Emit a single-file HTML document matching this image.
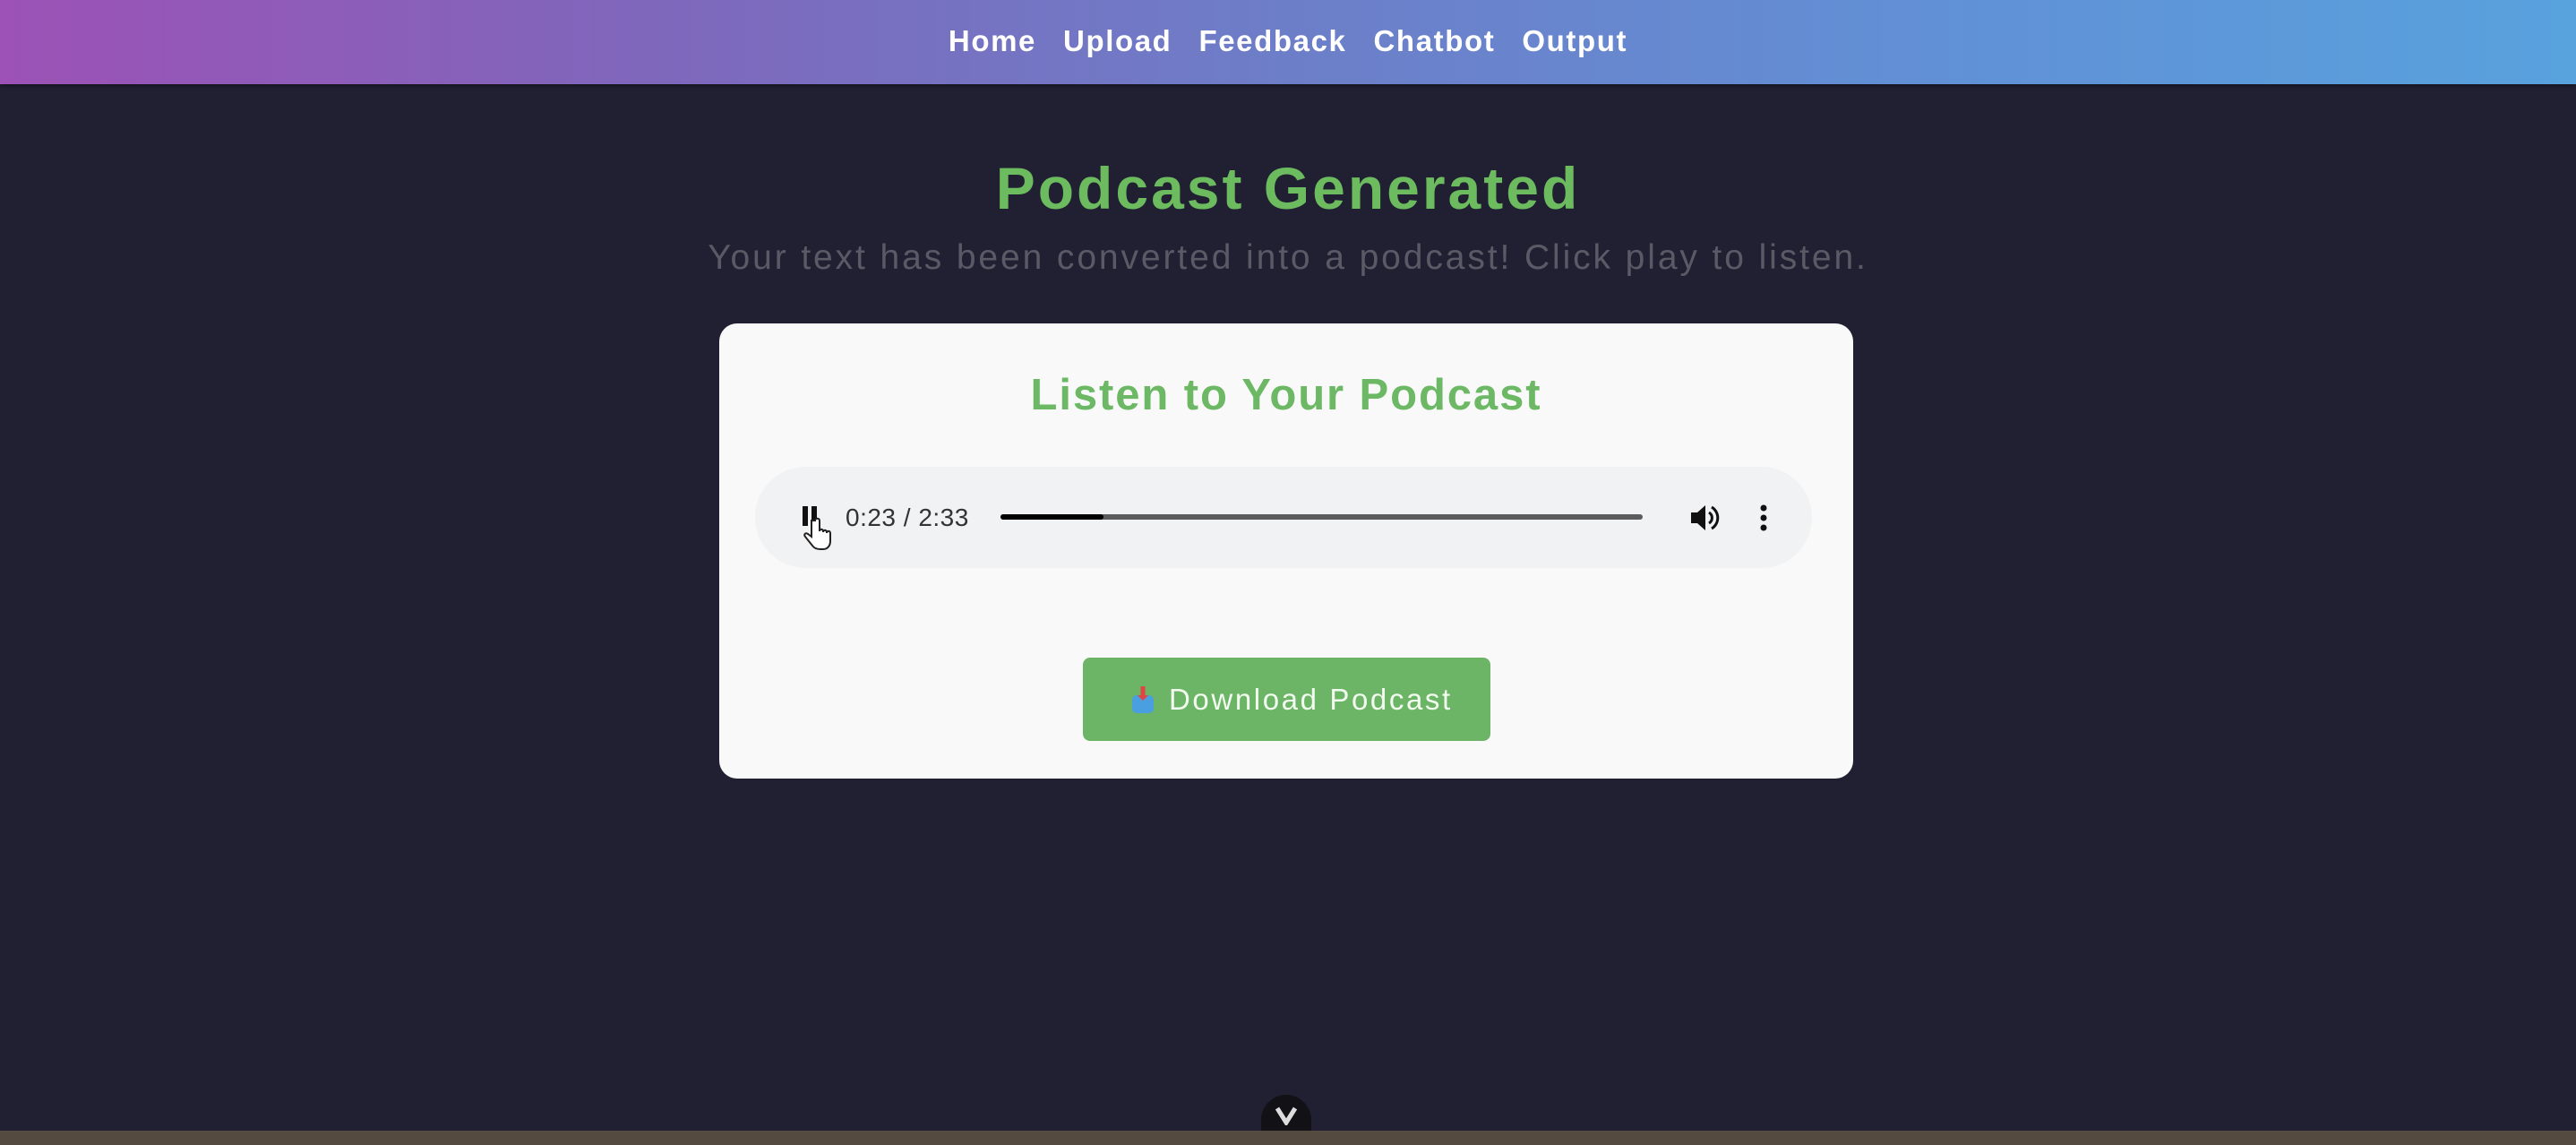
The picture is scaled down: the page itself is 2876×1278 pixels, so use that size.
<!DOCTYPE html>
<html><head><meta charset="utf-8"><style>
*{margin:0;padding:0;box-sizing:border-box}
html,body{width:2876px;height:1278px;overflow:hidden;background:#212033;font-family:"Liberation Sans",sans-serif}
.nav{position:absolute;left:0;top:0;width:2876px;height:94px;background:linear-gradient(90deg,#9c52b6 0%,#7f67bc 25%,#6d7ec8 50%,#6190d6 75%,#58a2de 100%);text-align:center;box-shadow:0 2px 4px rgba(0,0,0,.4)}
.nav span{display:inline-block;color:#fff;font-weight:bold;font-size:33px;line-height:92px;margin:0 15px;letter-spacing:1.6px}
.h1{position:absolute;left:0;width:2876px;top:172px;text-align:center;color:#6cbb5f;font-size:66px;font-weight:bold;letter-spacing:3px}
.sub{position:absolute;left:0;width:2876px;top:266px;text-align:center;color:#5a5a66;font-size:39px;letter-spacing:2.9px}
.card{position:absolute;left:803px;top:361px;width:1266px;height:508px;background:#f8f9f8;border-radius:20px}
.h2{position:absolute;left:0;width:100%;top:52px;text-align:center;color:#6cb865;font-size:49px;font-weight:bold;letter-spacing:1.9px}
.player{position:absolute;left:40px;top:160px;width:1180px;height:113px;background:#f1f2f3;border-radius:57px}
.time{position:absolute;left:101px;top:41px;font-size:28px;color:#333;letter-spacing:0.5px}
.bar{position:absolute;left:274px;top:53px;width:717px;height:6px;background:#5c5c5c;border-radius:3px}
.bar div{width:115px;height:6px;background:#000;border-radius:3px}
.btn{position:absolute;left:406px;top:373px;width:455px;height:93px;background:#6db566;border-radius:8px;color:#f2fbef;font-size:33px;line-height:93px;padding-left:96px;letter-spacing:2.6px}
.bottom{position:absolute;left:0;top:1262px;width:2876px;height:16px;background:#554a3f}
.chev{position:absolute;left:1408px;top:1222px;width:56px;height:44px;border-radius:28px 28px 0 0;background:#111116}
</style></head><body>
<div class="nav"><span>Home</span><span>Upload</span><span>Feedback</span><span>Chatbot</span><span>Output</span></div>
<div class="h1">Podcast Generated</div>
<div class="sub">Your text has been converted into a podcast! Click play to listen.</div>
<div class="card">
<div class="h2">Listen to Your Podcast</div>
<div class="player">
<svg style="position:absolute;left:44px;top:38px" width="60" height="70" viewBox="0 0 60 70">
<rect x="9" y="6" width="6" height="22" fill="#111"/><rect x="19" y="6" width="6" height="22" fill="#111"/>
<path d="M19 22 v18 l-4 -3 c-3 -2 -5 1 -3 3 l8 10 c2 3 5 4 9 4 h3 c5 0 8 -4 8 -9 v-9 c0 -3 -4 -3 -4 0 v-1 c0 -3 -4 -3 -4 0 v-1 c0 -3 -4 -3 -4 0 v-12 c0 -3 -5 -3 -5 0z" fill="#fff" stroke="#222" stroke-width="2"/>
</svg>
<div class="time">0:23 / 2:33</div>
<div class="bar"><div></div></div>
<svg style="position:absolute;left:1043px;top:41px" width="36" height="32" viewBox="0 0 36 32">
<path d="M2 10h7l9-8v28l-9-8H2z" fill="#111"/><path d="M22 10a7 7 0 0 1 0 12" stroke="#111" stroke-width="3" fill="none"/><path d="M25 4a14 14 0 0 1 0 24" stroke="#111" stroke-width="3" fill="none"/>
</svg>
<svg style="position:absolute;left:1121px;top:42px" width="10" height="30" viewBox="0 0 10 30"><circle cx="5" cy="4" r="3.5" fill="#111"/><circle cx="5" cy="15" r="3.5" fill="#111"/><circle cx="5" cy="26" r="3.5" fill="#111"/></svg>
</div>
<div class="btn"><svg style="position:absolute;left:52px;top:30px" width="30" height="36" viewBox="0 0 30 36"><rect x="3" y="12" width="24" height="20" rx="5" fill="#4a9fe0"/><path d="M15 2v14" stroke="#e04444" stroke-width="5"/><path d="M9 12l6 6 6-6" fill="#e04444"/></svg>Download Podcast</div>
</div>
<div class="chev"><svg style="position:absolute;left:15px;top:12px" width="26" height="22" viewBox="0 0 26 22"><path d="M3 3l10 16 10-16" stroke="#ddd" stroke-width="5" fill="none"/></svg></div>
<div class="bottom"></div>
</body></html>
